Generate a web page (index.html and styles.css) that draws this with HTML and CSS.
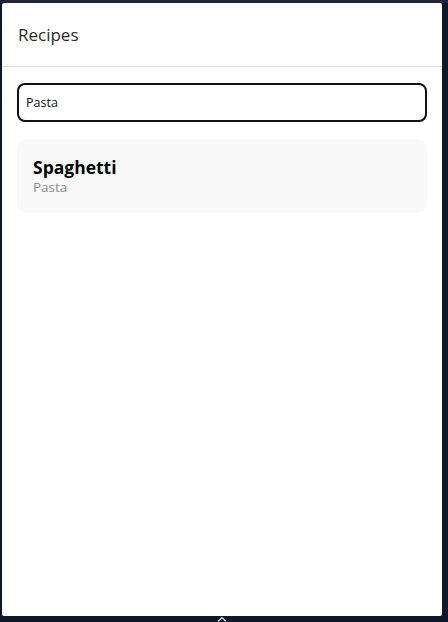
FILE: index.html
```html
<!DOCTYPE html>
<html lang="en">
<head>
<meta charset="utf-8">
<title>Recipes</title>
<link rel="stylesheet" href="styles.css">
</head>
<body>
  <div class="frame">
    <div class="panel">
      <header class="header">
        <h1 class="title">Recipes</h1>
      </header>
      <main class="content">
        <input class="search" type="text" value="Pasta">
        <div class="card">
          <div class="card-title">Spaghetti</div>
          <div class="card-sub">Pasta</div>
        </div>
      </main>
    </div>
    <svg class="caret" width="10" height="6" viewBox="0 0 10 6"><path d="M1 5.5 L5 1.5 L9 5.5" fill="none" stroke="#e5e7eb" stroke-width="1.2"/></svg>
  </div>
</body>
</html>
```
FILE: styles.css
```css
* { box-sizing: border-box; }
html, body { margin: 0; height: 100%; }
body {
  background: #111827;
  font-family: "Open Sans", "Noto Sans", sans-serif;
}
.frame {
  position: relative;
  height: 100%;
  padding: 3px 6px 6px 2px;
  background: linear-gradient(#1f2535 0, #1f2535 3px, #0f172a 3px);
}
.panel {
  background: #ffffff;
  height: 100%;
  border-radius: 2px;
  display: flex;
  flex-direction: column;
}
.header {
  height: 64px;
  border-bottom: 1px solid #dddddd;
  display: flex;
  align-items: center;
  padding: 0 16px;
}
.title {
  margin: 0;
  font-size: 17px;
  font-weight: 500;
  color: #2b2b2b;
}
.content {
  padding: 16px 15px;
  display: flex;
  flex-direction: column;
  gap: 17px;
}
.search {
  height: 39px;
  border: 2px solid #111111;
  border-radius: 8px;
  padding: 0 7px;
  font-family: "Open Sans", "Noto Sans", sans-serif;
  font-size: 12.5px;
  color: #111;
  outline: none;
}
.card {
  background: #f9f9f9;
  border-radius: 10px;
  padding: 17px 16px 16px;
}
.card-title {
  font-size: 17.5px;
  font-weight: 700;
  line-height: 22px;
  color: #000;
}
.card-sub {
  font-size: 13.5px;
  line-height: 19px;
  color: #8f8f8f;
}
.caret {
  position: absolute;
  left: 217px;
  bottom: 0;
}
```
